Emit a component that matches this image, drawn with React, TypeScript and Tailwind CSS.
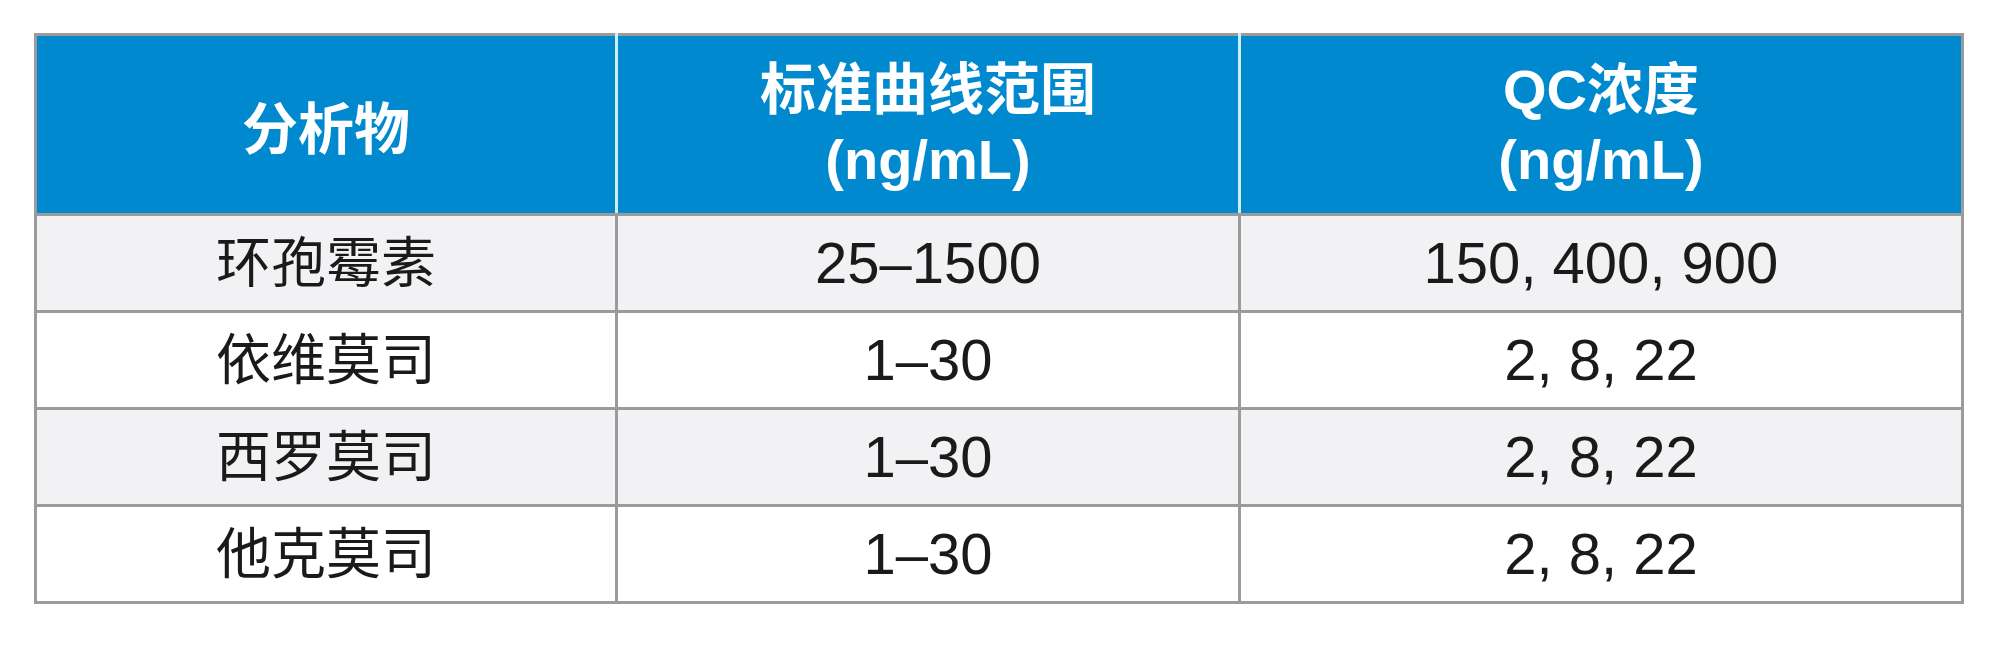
import React from "react";

const rows = [
  { name: "环孢霉素", range: "25–1500", qc: "150, 400, 900", bg: "bg-[#f2f2f4]" },
  { name: "依维莫司", range: "1–30", qc: "2, 8, 22", bg: "bg-white" },
  { name: "西罗莫司", range: "1–30", qc: "2, 8, 22", bg: "bg-[#f2f2f4]" },
  { name: "他克莫司", range: "1–30", qc: "2, 8, 22", bg: "bg-white" },
];

export default function App() {
  return (
    <div
      className="w-[2000px] h-[647px] bg-white pl-[34px] pt-[33px]"
      style={{ fontFamily: '"Liberation Sans", "Noto Sans CJK SC", Arial, sans-serif' }}
    >
      <table className="border-collapse table-fixed w-[1927px]">
        <colgroup>
          <col className="w-[581px]" />
          <col className="w-[623px]" />
          <col className="w-[723px]" />
        </colgroup>
        <thead>
          <tr className="bg-[#0089cf] text-white">
            <th className="h-[180px] p-0 border-[3px] border-[#9b9b9b] border-r-[#cdeefb] text-[56px] font-bold leading-[70px] text-center align-middle">
              <div className="pt-[10px]">分析物</div>
            </th>
            <th className="h-[180px] p-0 border-[3px] border-y-[#9b9b9b] border-x-[#cdeefb] text-[56px] font-bold leading-[70px] text-center align-middle">
              <div>标准曲线范围</div>
              <div>(ng/mL)</div>
            </th>
            <th className="h-[180px] p-0 border-[3px] border-[#9b9b9b] border-l-[#cdeefb] text-[56px] font-bold leading-[70px] text-center align-middle">
              <div>QC浓度</div>
              <div>(ng/mL)</div>
            </th>
          </tr>
        </thead>
        <tbody>
          {rows.map((r) => (
            <tr key={r.name} className={`${r.bg} text-[#1a1a1a]`}>
              <td className="h-[97px] p-0 border-[3px] border-[#9b9b9b] text-center align-middle text-[55px] leading-none">
                {r.name}
              </td>
              <td className="h-[97px] p-0 border-[3px] border-[#9b9b9b] text-center align-middle text-[58px] leading-none">
                {r.range}
              </td>
              <td className="h-[97px] p-0 border-[3px] border-[#9b9b9b] text-center align-middle text-[58px] leading-none">
                {r.qc}
              </td>
            </tr>
          ))}
        </tbody>
      </table>
    </div>
  );
}
